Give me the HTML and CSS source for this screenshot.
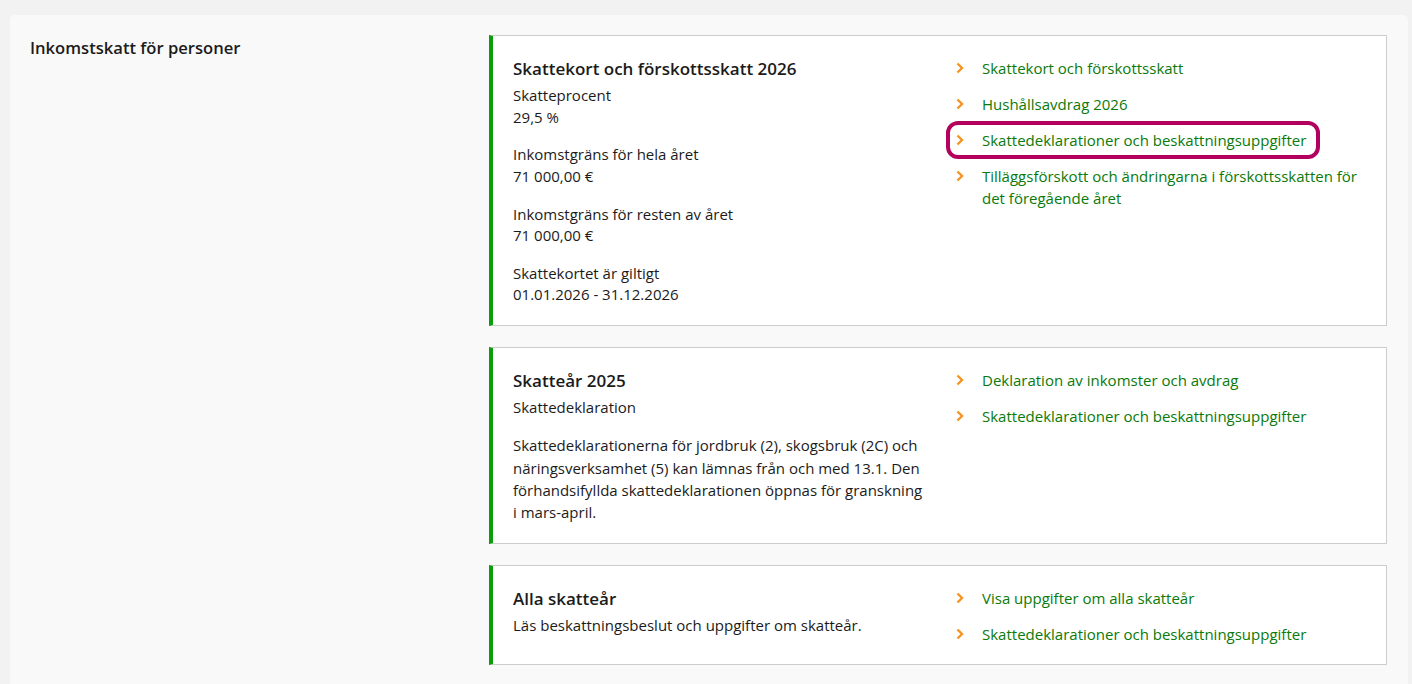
FILE: index.html
```html
<!DOCTYPE html>
<html lang="sv">
<head>
  <meta charset="UTF-8">
  <title>Inkomstskatt för personer</title>
  <link rel="stylesheet" href="styles.css">
</head>
<body>

<div class="panel">
  <h2 class="panel-title">Inkomstskatt för personer</h2>

  <div class="cards">

    <div class="card">
      <div class="card-info">
        <h3>Skattekort och förskottsskatt 2026</h3>
        <div class="group">
          <p>Skatteprocent</p>
          <p>29,5 %</p>
        </div>
        <div class="group">
          <p>Inkomstgräns för hela året</p>
          <p>71 000,00 €</p>
        </div>
        <div class="group">
          <p>Inkomstgräns för resten av året</p>
          <p>71 000,00 €</p>
        </div>
        <div class="group">
          <p>Skattekortet är giltigt</p>
          <p>01.01.2026 - 31.12.2026</p>
        </div>
      </div>
      <ul class="links">
        <li><a href="#"><svg class="chev" viewBox="0 0 8 12"><path d="M1.5 1.5 L6 6 L1.5 10.5"/></svg><span>Skattekort och förskottsskatt</span></a></li>
        <li><a href="#"><svg class="chev" viewBox="0 0 8 12"><path d="M1.5 1.5 L6 6 L1.5 10.5"/></svg><span>Hushållsavdrag 2026</span></a></li>
        <li class="marked"><a href="#"><svg class="chev" viewBox="0 0 8 12"><path d="M1.5 1.5 L6 6 L1.5 10.5"/></svg><span>Skattedeklarationer och beskattningsuppgifter</span></a></li>
        <li><a href="#"><svg class="chev" viewBox="0 0 8 12"><path d="M1.5 1.5 L6 6 L1.5 10.5"/></svg><span>Tilläggsförskott och ändringarna i förskottsskatten för det föregående året</span></a></li>
      </ul>
    </div>

    <div class="card">
      <div class="card-info">
        <h3>Skatteår 2025</h3>
        <p>Skattedeklaration</p>
        <p class="note">Skattedeklarationerna för jordbruk (2), skogsbruk (2C) och näringsverksamhet (5) kan lämnas från och med 13.1. Den förhandsifyllda skattedeklarationen öppnas för granskning i mars-april.</p>
      </div>
      <ul class="links">
        <li><a href="#"><svg class="chev" viewBox="0 0 8 12"><path d="M1.5 1.5 L6 6 L1.5 10.5"/></svg><span>Deklaration av inkomster och avdrag</span></a></li>
        <li><a href="#"><svg class="chev" viewBox="0 0 8 12"><path d="M1.5 1.5 L6 6 L1.5 10.5"/></svg><span>Skattedeklarationer och beskattningsuppgifter</span></a></li>
      </ul>
    </div>

    <div class="card">
      <div class="card-info">
        <h3>Alla skatteår</h3>
        <p>Läs beskattningsbeslut och uppgifter om skatteår.</p>
      </div>
      <ul class="links">
        <li><a href="#"><svg class="chev" viewBox="0 0 8 12"><path d="M1.5 1.5 L6 6 L1.5 10.5"/></svg><span>Visa uppgifter om alla skatteår</span></a></li>
        <li><a href="#"><svg class="chev" viewBox="0 0 8 12"><path d="M1.5 1.5 L6 6 L1.5 10.5"/></svg><span>Skattedeklarationer och beskattningsuppgifter</span></a></li>
      </ul>
    </div>

  </div>
</div>

</body>
</html>
```

FILE: styles.css
```css
body {
  margin: 0;
  padding: 15px 4px 0 10px;
  background: #f2f2f2;
  font-family: "Open Sans", "Noto Sans", Arial, sans-serif;
  font-size: 15px;
  color: #1b1b1b;
}
.panel {
  background: #f9f9f9;
  border-radius: 5px;
  padding: 20px 20px 20px 20px;
  display: flex;
  min-height: 700px;
}
.panel-title {
  margin: 0;
  padding-top: 1px;
  width: 459px;
  font-size: 16.6px;
  font-weight: 600;
  line-height: 24px;
}
.cards {
  width: 898px;
  display: flex;
  flex-direction: column;
  gap: 21px;
}
.card {
  background: white;
  border: 1px solid #cccccc;
  border-left: 4px solid #0a9e0a;
  padding: 21px 20px 19px 20px;
  display: grid;
  grid-template-columns: 412px 1fr;
  column-gap: 31px;
}
.card h3 {
  margin: 0 0 4px 0;
  font-size: 17px;
  font-weight: 600;
  line-height: 24px;
}
.card p {
  margin: 0;
  line-height: 21.5px;
}
.group + .group {
  margin-top: 16.3px;
}
.note {
  margin-top: 16px !important;
  line-height: 22.3px !important;
}
.links {
  list-style: none;
  margin: 0;
  padding: 0;
}
.links li {
  margin-bottom: 14px;
}
.links li:last-child {
  margin-bottom: 0;
}
.links a {
  display: flex;
  align-items: flex-start;
  color: #0a7a0a;
  text-decoration: none;
  line-height: 22px;
}
.chev {
  flex: none;
  width: 8px;
  height: 12px;
  margin: 5px 18px 0 0;
  fill: none;
  stroke: #f39324;
  stroke-width: 2.4;
}
.marked a {
  width: fit-content;
  outline: 4px solid #b3005e;
  outline-offset: 4px;
  border-radius: 4px;
  padding: 0 6px 0 2px;
  margin-left: -2px;
}
```
